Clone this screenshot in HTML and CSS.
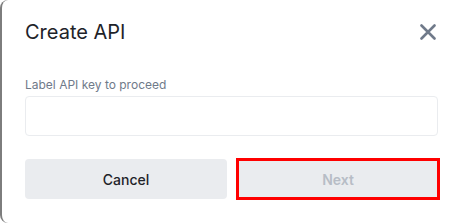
FILE: index.html
```html
<!DOCTYPE html>
<html>
  <head>
    <title>Create API</title>
    <link rel="stylesheet" href="styles.css">
  </head>
  <body>
    <div class="dialog">
      <div class="dialog-head">
        <h2 class="dialog-title">Create API</h2>
        <button class="close" aria-label="Close">
          <svg width="16" height="16" viewBox="0 0 16 16">
            <path d="M1.5 1.5 L14.5 14.5 M14.5 1.5 L1.5 14.5" stroke="#707a8a" stroke-width="2.6" stroke-linecap="round" fill="none"/>
          </svg>
        </button>
      </div>
      <label class="field-label" for="apilabel">Label API key to proceed</label>
      <input type="text" id="apilabel" class="field">
      <div class="actions">
        <button class="btn">Cancel</button>
        <button class="btn btn-next" disabled>Next</button>
      </div>
    </div>
  </body>
</html>
```

FILE: styles.css
```css
html, body {
  margin:0;
  background:#fff;
}
body {
  font-family:Inter, "Noto Sans", sans-serif;
  color:#1e2329;
}
.dialog {
  height:223px;
  box-sizing:border-box;
  border-left:2px solid #7d7d7d;
  border-radius:8px 0 0 8px;
  padding:18px 23px 0 23px;
}
.dialog-head {
  display:flex;
  align-items:center;
  justify-content:space-between;
  height:28px;
}
.dialog-title {
  margin:0;
  font-size:20px;
  font-weight:400;
  line-height:28px;
}
.close {
  border:0;
  background:none;
  padding:0;
  margin-right:3px;
  width:16px;
  height:16px;
  display:flex;
}
.field-label {
  display:block;
  margin-top:31px;
  font-size:12px;
  line-height:16px;
  color:#707a8a;
}
.field {
  display:block;
  box-sizing:border-box;
  margin-top:3px;
  width:413px;
  height:40px;
  border:1px solid #eaecef;
  border-radius:4px;
  outline:none;
}
.actions {
  display:flex;
  gap:10px;
  margin-top:23px;
  width:414px;
}
.btn {
  flex:1;
  height:40px;
  border:0;
  border-radius:4px;
  background:#eaecef;
  font-family:inherit;
  font-size:14px;
  font-weight:500;
  color:#1e2329;
}
.btn-next {
  color:#b7bdc6;
  font-weight:600;
  outline:3px solid #f00;
  outline-offset:-2px;
  border-radius:0;
}
```
